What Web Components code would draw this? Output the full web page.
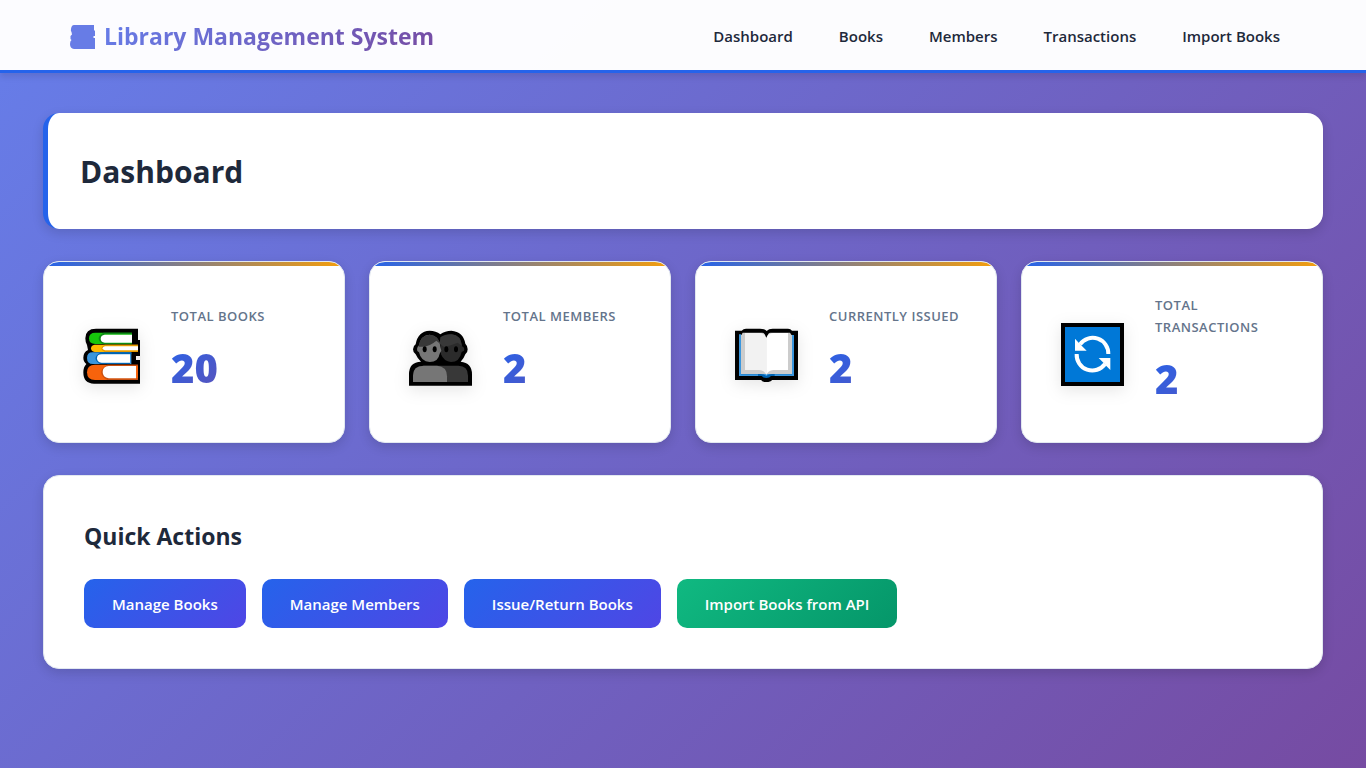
<!DOCTYPE html>
<html lang="en">
<head>
<meta charset="utf-8">
<meta name="viewport" content="width=device-width, initial-scale=1">
<title>Library Management System</title>
<style>
html { min-height: 100%; background: linear-gradient(135deg, #667eea 0%, #764ba2 100%); }
body { margin: 0; font: 16px/26px "Open Sans", "Noto Sans", sans-serif; color: #1e293b; }
</style>
</head>
<body>
<library-app></library-app>

<template id="t-app">
<style>
:host { display: block; }
main { max-width: 1280px; margin: 0 auto; padding: 40px 0; display: grid; gap: 32px; }
.stats { display: grid; grid-template-columns: repeat(4, minmax(0, 1fr)); gap: 24px; }
svg { display: block; flex: none; height: 76px; filter: drop-shadow(0 4px 8px rgba(0,0,0,.1)); }
@media (max-width: 1280px) { main { padding: 40px 24px; } .stats { grid-template-columns: repeat(auto-fit, minmax(280px, 1fr)); } }
</style>
<site-header></site-header>
<main>
  <page-title>Dashboard</page-title>
  <section class="stats">
    <stat-card label="Total Books" value="20">
      <svg width="71" viewBox="18 -3 213 228" aria-hidden="true">
        <path d="M78 41H204V75H210V206H72Q40 206 40 172 40 156 49 147 40 140 40 128 40 112 54 105L51 90Q46 82 46 70 46 41 78 41Z"/>
        <path d="M198 123h14v12h-14z" fill="#eee"/>
        <path d="M76 53H186V87H76Q57 87 57 70T76 53Z" fill="#16c60c"/>
        <path d="M100 53H186V58H104Q86 71 104 83H186V88H100Q72 70 100 53Z" fill="#0d8a16"/>
        <path d="M104 59H186V83H104Q92 81 92 71T104 59Z" fill="#fff"/>
        <path d="M74 89H204V111H74Q63 109 63 100T74 89Z" fill="#ffb900"/>
        <path d="M104 89H204V94H104V106H204V111H104Q84 100 104 89Z" fill="#e69a00"/>
        <path d="M105 94H204V106H105Q98 105 98 100T105 94Z" fill="#fff"/>
        <path d="M69 112H184V147H69Q51 147 51 129T69 112Z" fill="#3a96dd"/>
        <path d="M92 112H184V118H95V143H180V147H90Q62 130 92 112Z" fill="#0063b1"/>
        <path d="M94 118H180V143H94Q81 142 81 130T94 118Z" fill="#fff"/>
        <path d="M75 149H204V195H75Q51 195 51 172T75 149Z" fill="#f7630c"/>
        <path d="M112 149H204V153H115V190H204V195H112Q75 172 112 149Z" fill="#ca5010"/>
        <path d="M116 153H198V190H116Q98 187 98 171T116 153Z" fill="#fff"/>
      </svg>
    </stat-card>
    <stat-card label="Total Members" value="2">
      <svg width="77" viewBox="21 -3 231 228" aria-hidden="true">
        <path d="M104 47Q123 47 136 58 150 47 169 47 205 50 211 86 218 92 218 103T211 118Q207 130 197 140 231 143 231 178V212H42V178Q42 141 78 140 67 130 62 118 54 113 54 103T62 88Q68 49 104 47Z"/>
        <path d="M54 201V182Q54 152 86 152H190Q219 152 219 182V201Z" fill="#383838"/>
        <path d="M54 201V182Q54 152 86 152H126Q156 154 156 184V201Z" fill="#767676"/>
        <path d="M136 85Q142 58 170 58 198 60 201 94 210 98 207 107L200 111Q194 141 168 141 147 140 138 118Z" fill="#2b2b2b"/>
        <path d="M136 67Q150 57 170 58 197 60 201 93L188 83Q170 91 147 96L134 86Z" fill="#383838"/>
        <path d="M72 91Q78 60 104 59 134 62 136 95L139 107 134 116Q130 141 104 141 78 140 72 112 65 110 66 102T72 91Z" fill="#767676"/>
        <path d="M71 95Q75 60 104 59 129 60 135 86L124 77Q106 93 82 95Z" fill="#383838"/>
        <g><ellipse cx="89" cy="103" rx="6" ry="9"/><ellipse cx="119" cy="103" rx="6" ry="9"/><ellipse cx="154" cy="103" rx="6" ry="9"/><ellipse cx="183" cy="103" rx="6" ry="9"/></g>
      </svg>
    </stat-card>
    <stat-card label="Currently Issued" value="2">
      <svg width="77" viewBox="18 -3 231 228" aria-hidden="true">
        <path d="M39 47H59Q64 41 72 41H114Q128 41 134 48 140 41 152 41H198Q206 41 210 47H228V195H150Q146 201 133 201T118 195H39Z"/>
        <path d="M51 58H216V183H51Z" fill="#3a96dd"/>
        <path d="M57 60H210V177H57Z" fill="#ccc"/>
        <path d="M57 177H116Q127 177 133 183 139 177 150 177H210V183H147Q143 189 133 189T119 183H57Z" fill="#0063b1"/>
        <path d="M57 178H108V183H57zM158 178H210V183H158z" fill="#3a96dd"/>
        <path d="M57 57H216V60H57z" />
        <path d="M62 53H127L133 68 140 53H204L210 62V70H57V62Z" fill="#ccc"/>
        <path d="M69 54H112Q126 54 133 68V180Q128 166 112 165H69Z" fill="#f2f2f2"/>
        <path d="M133 68Q140 54 154 54H198V165H154Q138 166 133 180Z" fill="#fff"/>
        <path d="M120 50H146L138 57 133 68 128 57Z"/>
      </svg>
    </stat-card>
    <stat-card label="Total Transactions" value="2">
      <svg width="77" viewBox="18 12 231 228" aria-hidden="true">
        <path d="M39 39H228V228H39Z"/>
        <path d="M51 51H216V216H51Z" fill="#0078d7"/>
        <path d="M181 132A47 47 0 0 0 96 103M86 132A47 47 0 0 0 171 162" fill="none" stroke="#fff" stroke-width="12"/>
        <path d="M81 86V122H116L104 110 92 98ZM187 180V144H152L164 156 175 168Z" fill="#fff"/>
      </svg>
    </stat-card>
  </section>
  <quick-actions heading="Quick Actions">
    <action-button>Manage Books</action-button>
    <action-button>Manage Members</action-button>
    <action-button>Issue/Return Books</action-button>
    <action-button kind="success">Import Books from API</action-button>
  </quick-actions>
</main>
</template>

<template id="t-header">
<style>
:host { display: block; background: rgba(255,255,255,.98); border-bottom: 3px solid #2563eb; box-shadow: 0 4px 6px rgba(0,0,0,.1); }
.bar { max-width: 1232px; min-height: 68px; margin: 0 auto; padding-top: 2px; display: flex; flex-wrap: wrap; align-items: center; justify-content: space-between; }
.brand { display: flex; align-items: center; gap: 8px; padding: 0 2px; font-size: 23px; line-height: 38px; font-weight: 700; text-decoration: none; }
.brand span { background: linear-gradient(135deg, #667eea, #764ba2); -webkit-background-clip: text; background-clip: text; color: transparent; }
svg { display: block; }
nav { display: flex; flex-wrap: wrap; gap: 8px; }
nav a { padding: 8px 19px; font-size: 15px; font-weight: 600; color: #1e293b; text-decoration: none; }
</style>
<div class="bar">
  <a class="brand" href="#">
    <svg width="27" height="28" viewBox="0 0 27 28" aria-hidden="true"><path d="M5 3H25V8.500H26V14H24.500V16H26V27H5Q1 26.500 1 22 1 19 2.500 18 1 17 1.500 14L3 12.500 2.500 10Q1.500 9 2 7 2.500 3 5 3Z" fill="#677ce6"/></svg>
    <span>Library Management System</span>
  </a>
  <nav>
    <a href="#">Dashboard</a><a href="#">Books</a><a href="#">Members</a><a href="#">Transactions</a><a href="#">Import Books</a>
  </nav>
</div>
</template>

<template id="t-title">
<style>
:host { display: block; background: #fff; padding: 32px; border-left: 5px solid #2563eb; border-radius: 16px; box-shadow: 0 4px 12px rgba(0,0,0,.14); }
h1 { margin: 0; padding-top: 2px; font-size: 30px; line-height: 50px; font-weight: 700; }
</style>
<h1><slot></slot></h1>
</template>

<template id="t-stat">
<style>
:host { display: flex; align-items: center; gap: 24px; box-sizing: border-box; min-height: 182px; padding: 32px; border: 1px solid #e2e8f0; border-radius: 16px; overflow: hidden;
  background: linear-gradient(90deg, #2563eb, #f59e0b) top / 100% 4px no-repeat, #fff; background-origin: padding-box; box-shadow: 0 4px 12px rgba(0,0,0,.14); }
h3 { margin: 0 0 8px; font-size: 13px; line-height: 22px; font-weight: 600; letter-spacing: .5px; text-transform: uppercase; color: #64748b; }
p { margin: 0; padding-top: 2px; font: 900 40px/62px "Noto Sans", "Open Sans", sans-serif; background: linear-gradient(135deg, #2563eb, #764ba2); -webkit-background-clip: text; background-clip: text; color: transparent; }
</style>
<slot></slot>
<div><h3></h3><p></p></div>
</template>

<template id="t-quick">
<style>
:host { display: block; background: #fff; padding: 40px; border: 1px solid #e2e8f0; border-radius: 16px; box-shadow: 0 4px 12px rgba(0,0,0,.14); }
h2 { margin: 0 0 24px; padding-top: 2px; font-size: 23px; line-height: 37px; font-weight: 700; }
.row { display: flex; flex-wrap: wrap; gap: 16px; }
</style>
<h2></h2>
<div class="row"><slot></slot></div>
</template>

<template id="t-button">
<style>
:host { display: block; --fill: linear-gradient(135deg, #2563eb, #4f46e5); }
:host([kind="success"]) { --fill: linear-gradient(135deg, #10b981, #059669); }
button { display: block; padding: 13px 28px 11px; border: 0; border-radius: 10px; background: var(--fill); color: #fff; font: 600 15px/25px "Open Sans", "Noto Sans", sans-serif; cursor: pointer; }
</style>
<button type="button"><slot></slot></button>
</template>

<script>
class TemplateElement extends HTMLElement {
  constructor() {
    super();
    this.attachShadow({ mode: "open" })
      .append(document.getElementById(this.constructor.template).content.cloneNode(true));
  }
}
customElements.define("site-header", class extends TemplateElement { static template = "t-header"; });
customElements.define("page-title", class extends TemplateElement { static template = "t-title"; });
customElements.define("action-button", class extends TemplateElement { static template = "t-button"; });
customElements.define("stat-card", class extends TemplateElement {
  static template = "t-stat";
  connectedCallback() {
    this.shadowRoot.querySelector("h3").textContent = this.getAttribute("label");
    this.shadowRoot.querySelector("p").textContent = this.getAttribute("value");
  }
});
customElements.define("quick-actions", class extends TemplateElement {
  static template = "t-quick";
  connectedCallback() { this.shadowRoot.querySelector("h2").textContent = this.getAttribute("heading"); }
});
customElements.define("library-app", class extends TemplateElement { static template = "t-app"; });
</script>
</body>
</html>
